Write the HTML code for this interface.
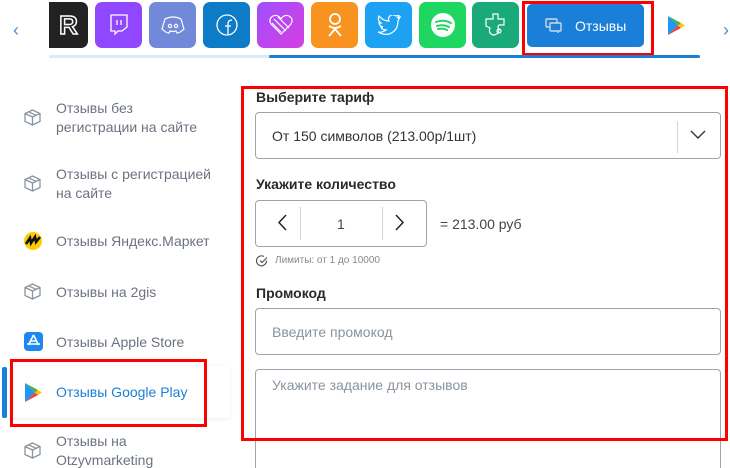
<!DOCTYPE html>
<html style="width:730px;height:468px;overflow:hidden"><head><meta charset="utf-8"><style>
*{box-sizing:border-box;margin:0;padding:0}
body{width:730px;height:468px;overflow:hidden;background:#fff;font-family:"Liberation Sans",sans-serif;position:relative}
.a{position:absolute}
.tile{position:absolute;top:2px;width:47px;height:46px;border-radius:7px;display:flex;align-items:center;justify-content:center}
.lbl{position:absolute;left:256px;font-weight:bold;font-size:14px;color:#2a2a2a}
.box{position:absolute;border:1px solid #9aa5b1;border-radius:4px;background:#fff}
.mi{position:absolute;left:56px;font-size:14px;color:#6b7280;line-height:19px}
.ic{position:absolute;left:24px}
</style></head><body>
<div class="a" style="left:13px;top:20px;color:#4a90d9;font-size:18px">&#x2039;</div>
<div class="a" style="left:723px;top:20px;color:#4a90d9;font-size:18px">&#x203A;</div>
<div class="tile" style="left:49px;width:39px;background:#222;border-radius:0 7px 7px 0"><span style="color:#222;font-weight:bold;font-size:26px;-webkit-text-stroke:1.5px #fff">R</span></div>
<div class="tile" style="left:95px;background:#9146ff"><svg width="20" height="22" viewBox="0 0 20 22" fill="none" stroke="#fff" stroke-width="1.3"><path d="M2 1h16v12l-5 4H9l-3 3v-3H2z"/><path d="M8 6v5M12 6v5"/></svg></div>
<div class="tile" style="left:149px;background:#7289da"><svg width="24" height="18" viewBox="0 0 24 18" fill="none" stroke="#fff" stroke-width="1.2"><path d="M4 3q8-4 16 0l3 10q-4 4-7 4l-1-2q-3 1-6 0l-1 2q-3 0-7-4z"/><circle cx="9" cy="10" r="1.6"/><circle cx="15" cy="10" r="1.6"/></svg></div>
<div class="tile" style="left:203px;background:#0e7bc6"><svg width="24" height="24" viewBox="0 0 24 24" fill="none" stroke="#fff" stroke-width="1.3"><circle cx="12" cy="12" r="10"/><path d="M13 22V11q0-4 4-4M10 13h6"/></svg></div>
<div class="tile" style="left:257px;background:linear-gradient(135deg,#a04fff,#d63ee0)"><svg width="26" height="22" viewBox="0 0 26 22" fill="none" stroke="#fff" stroke-width="1.2"><path d="M13 20L3 10Q0 5 5 2q5-2 8 3q3-5 8-3q5 3 2 8z"/><path d="M6 5l12 12M10 3l11 11M4 9l9 9"/></svg></div>
<div class="tile" style="left:311px;background:#f7931e"><svg width="20" height="26" viewBox="0 0 20 26" fill="none" stroke="#fff" stroke-width="1.8"><circle cx="10" cy="7" r="5"/><path d="M4 14q6 4 12 0M10 17l-6 7M10 17l6 7"/></svg></div>
<div class="tile" style="left:365px;background:#1da1f2"><svg width="24" height="20" viewBox="0 0 24 20" fill="none" stroke="#fff" stroke-width="1.2"><path d="M23 2q-2 1-3 1q2-1 2-3q-2 1-3 1q-4-3-7 1q-1 2 0 4Q6 6 2 1Q0 5 4 8Q2 8 2 7q0 4 4 5H4q1 3 5 3Q5 18 1 17q11 6 18-3q2-4 2-8z"/></svg></div>
<div class="tile" style="left:419px;background:#1ed760"><svg width="26" height="26" viewBox="0 0 26 26"><circle cx="13" cy="13" r="12" fill="#fff"/><path d="M6 10q8-3 15 1M7 14q6-2 12 1M8 17q5-1 9 1" stroke="#1ed760" stroke-width="2" fill="none" stroke-linecap="round"/></svg></div>
<div class="tile" style="left:472px;background:#1aa978"><svg width="22" height="26" viewBox="0 0 22 26" fill="none" stroke="#fff" stroke-width="1.2"><path d="M8 2h5v5h6v6h-5q-2 2 0 5q-1 5-6 5q-5-2-3-7l-4-2V7h7z"/><circle cx="14" cy="19" r="2"/></svg></div>
<div class="a" style="left:522px;top:1px;width:132px;height:55px;border:3px solid #f00"></div>
<div class="a" style="left:527px;top:4px;width:117px;height:43px;background:#1a7fd8;border-radius:5px;color:#fff;font-size:14px;display:flex;align-items:center;padding-left:18px"><svg width="18" height="16" viewBox="0 0 18 16" fill="none" stroke="#cfd8e3" stroke-width="1.4" style="margin-right:12px"><rect x="1" y="1" width="11" height="8" rx="1"/><rect x="5" y="5" width="11" height="8" rx="1" fill="#1a7fd8"/><path d="M13 13v2"/></svg>Отзывы</div>
<svg class="a" style="left:667px;top:15px" width="19" height="21" viewBox="0 0 19 21"><path d="M1 1l10 9.5L1 20z" fill="#2196f3"/><path d="M1 1l13 7-3 2.5z" fill="#4caf50"/><path d="M1 20l13-7-3-2.5z" fill="#f44336"/><path d="M14 8l4 2.5-4 2.5-3-2.5z" fill="#ffc107"/></svg>
<div class="a" style="left:49px;top:55px;width:651px;height:3px;background:#d6ebfb;border-radius:2px"></div>
<div class="a" style="left:269px;top:55px;width:431px;height:3px;background:#1a7fd8;border-radius:2px"></div>

<svg class="ic" style="top:109px" width="17" height="17" viewBox="0 0 17 17" fill="none" stroke="#8a949e" stroke-width="1.3"><path d="M8.5 1L16 4.5v8L8.5 16 1 12.5v-8zM1 4.5l7.5 3.5L16 4.5M8.5 8v8M4.5 2.8l7.5 3.5"/></svg>
<div class="mi" style="top:99px">Отзывы без<br>регистрации на сайте</div>
<svg class="ic" style="top:175px" width="17" height="17" viewBox="0 0 17 17" fill="none" stroke="#8a949e" stroke-width="1.3"><path d="M8.5 1L16 4.5v8L8.5 16 1 12.5v-8zM1 4.5l7.5 3.5L16 4.5M8.5 8v8M4.5 2.8l7.5 3.5"/></svg>
<div class="mi" style="top:165px">Отзывы с регистрацией<br>на сайте</div>
<svg class="ic" style="top:232px" width="18" height="18" viewBox="0 0 18 18"><circle cx="9" cy="9" r="9" fill="#fc0"/><path d="M2 12l4-6 1 5 4-6 1 5 4-5" stroke="#111" stroke-width="2.6" fill="none"/></svg>
<div class="mi" style="top:232px">Отзывы Яндекс.Маркет</div>
<svg class="ic" style="top:283px" width="17" height="17" viewBox="0 0 17 17" fill="none" stroke="#8a949e" stroke-width="1.3"><path d="M8.5 1L16 4.5v8L8.5 16 1 12.5v-8zM1 4.5l7.5 3.5L16 4.5M8.5 8v8M4.5 2.8l7.5 3.5"/></svg>
<div class="mi" style="top:283px">Отзывы на 2gis</div>
<svg class="ic" style="top:332px" width="19" height="19" viewBox="0 0 19 19"><rect width="19" height="19" rx="4" fill="#1e88f0"/><path d="M9.5 3l-5 10M9.5 3l5 10M3 12h13M7 9h5" stroke="#fff" stroke-width="1.6"/></svg>
<div class="mi" style="top:333px">Отзывы Apple Store</div>
<div class="a" style="left:10px;top:366px;width:220px;height:52px;background:#fff;box-shadow:0 1px 4px rgba(0,0,0,.08);border-radius:3px"></div>
<div class="a" style="left:2px;top:367px;width:5px;height:51px;background:#1a7fd8;border-radius:2px"></div>
<svg class="ic" style="top:382px" width="19" height="21" viewBox="0 0 19 21"><path d="M1 1l10 9.5L1 20z" fill="#2196f3"/><path d="M1 1l13 7-3 2.5z" fill="#4caf50"/><path d="M1 20l13-7-3-2.5z" fill="#f44336"/><path d="M14 8l4 2.5-4 2.5-3-2.5z" fill="#ffc107"/></svg>
<div class="mi" style="top:383px;color:#1a7fd8">Отзывы Google Play</div>
<div class="a" style="left:10px;top:359px;width:197px;height:68px;border:3px solid #f00"></div>
<svg class="ic" style="top:442px" width="17" height="17" viewBox="0 0 17 17" fill="none" stroke="#8a949e" stroke-width="1.3"><path d="M8.5 1L16 4.5v8L8.5 16 1 12.5v-8zM1 4.5l7.5 3.5L16 4.5M8.5 8v8M4.5 2.8l7.5 3.5"/></svg>
<div class="mi" style="top:432px">Отзывы на<br>Otzyvmarketing</div>

<div class="lbl" style="top:89px">Выберите тариф</div>
<div class="box" style="left:255px;top:112px;width:466px;height:47px"></div>
<div class="a" style="left:272px;top:128px;font-size:14px;color:#333">От 150 символов (213.00р/1шт)</div>
<div class="a" style="left:677px;top:121px;width:1px;height:32px;background:#d0d4d8"></div>
<svg class="a" style="left:690px;top:130px" width="16" height="10" viewBox="0 0 16 10" fill="none" stroke="#333" stroke-width="1.4"><path d="M1 1l7 7 7-7"/></svg>
<div class="lbl" style="top:176px">Укажите количество</div>
<div class="box" style="left:255px;top:200px;width:172px;height:47px"></div>
<div class="a" style="left:300px;top:207px;width:1px;height:33px;background:#d0d4d8"></div>
<div class="a" style="left:382px;top:207px;width:1px;height:33px;background:#d0d4d8"></div>
<svg class="a" style="left:278px;top:214px" width="9" height="17" viewBox="0 0 9 17" fill="none" stroke="#222" stroke-width="1.5"><path d="M8 1L1 8.5 8 16"/></svg>
<svg class="a" style="left:395px;top:214px" width="9" height="17" viewBox="0 0 9 17" fill="none" stroke="#222" stroke-width="1.5"><path d="M1 1l7 7.5L1 16"/></svg>
<div class="a" style="left:337px;top:216px;font-size:14px;color:#444">1</div>
<div class="a" style="left:440px;top:216px;font-size:14px;color:#444">= 213.00 руб</div>
<svg class="a" style="left:256px;top:255px" width="12" height="12" viewBox="0 0 12 12" fill="none" stroke="#555" stroke-width="1.2"><path d="M10.5 5.5A5 5 0 1 1 8 1.5M4 5.5l2 2 5-5"/></svg>
<div class="a" style="left:275px;top:255px;font-size:10px;color:#888">Лимиты: от 1 до 10000</div>
<div class="lbl" style="top:285px">Промокод</div>
<div class="box" style="left:255px;top:308px;width:466px;height:47px"></div>
<div class="a" style="left:272px;top:324px;font-size:14px;color:#8a949e">Введите промокод</div>
<div class="box" style="left:255px;top:369px;width:466px;height:99px;border-bottom:none;border-radius:4px 4px 0 0"></div>
<div class="a" style="left:272px;top:377px;font-size:14px;color:#8a949e">Укажите задание для отзывов</div>
<div class="a" style="left:241px;top:86px;width:487px;height:355px;border:3px solid #f00"></div>
</body></html>
